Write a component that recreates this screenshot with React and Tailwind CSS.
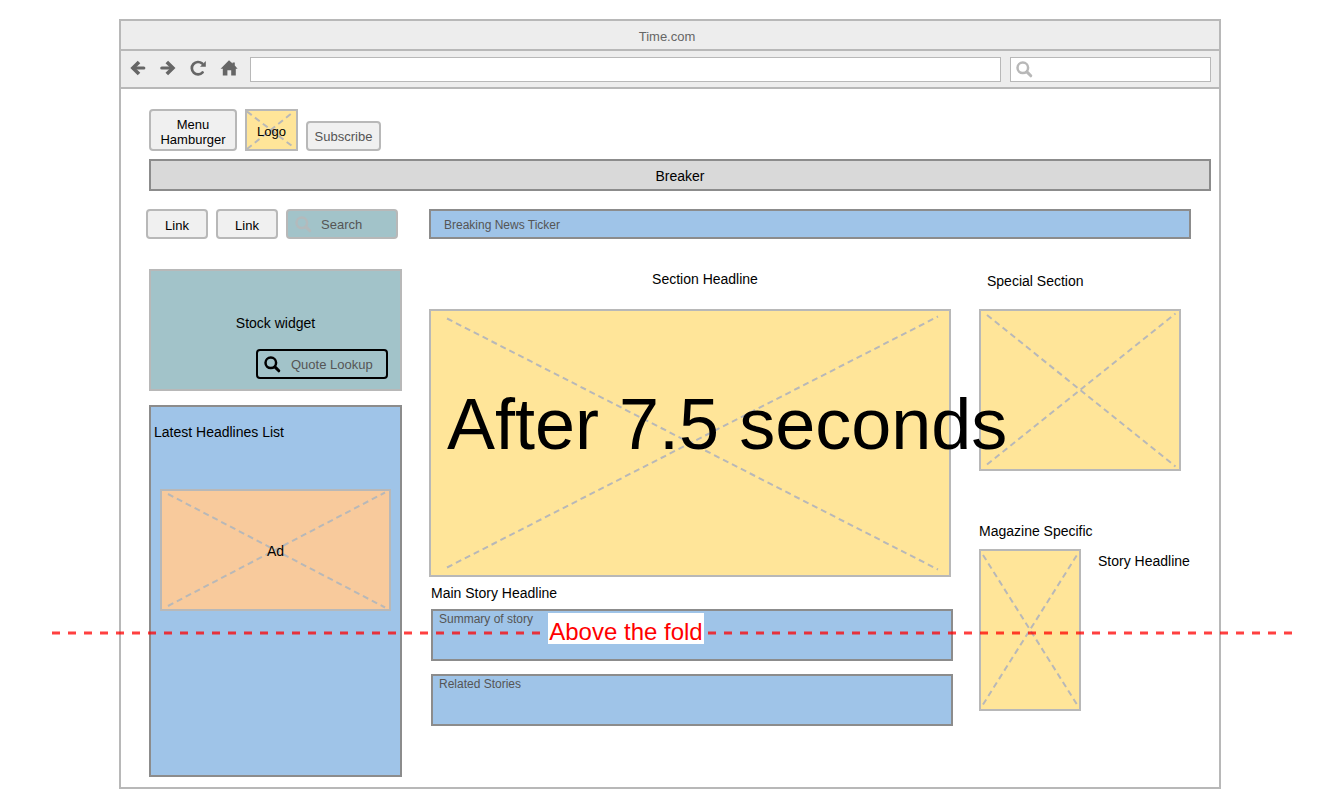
function Magnifier({ className }) {
  return (
    <svg viewBox="0 0 17 17" className={className} fill="none" stroke="currentColor" aria-hidden="true">
      <circle cx="6.8" cy="6.8" r="5.3" strokeWidth="2.5" />
      <path d="M10.9 10.9L14.8 14.8" strokeWidth="3" strokeLinecap="round" />
    </svg>
  );
}

function Crossed({ width, height, lines, className, children }) {
  return (
    <div className={`relative border-2 border-[#b8b8b8] ${className}`}>
      <svg
        viewBox={`0 0 ${width} ${height}`}
        preserveAspectRatio="none"
        className="absolute inset-0 h-full w-full"
        stroke="#b8b8b8"
        strokeWidth="2"
        strokeDasharray="6 4"
        aria-hidden="true"
      >
        {lines.map(([x1, y1, x2, y2]) => (
          <line key={y1} x1={x1} y1={y1} x2={x2} y2={y2} vectorEffect="non-scaling-stroke" />
        ))}
      </svg>
      {children}
    </div>
  );
}

function Toolbar() {
  return (
    <div className="flex h-9 items-center bg-[#ededed] pr-2 pl-[9px] text-[#666]">
      <div className="flex gap-[14px]">
        <button type="button" aria-label="Back">
          <svg viewBox="0 0 16 16" className="h-4 w-4 overflow-visible" fill="none" stroke="currentColor" strokeWidth="3.6">
            <path d="M9 0.9L2.9 7L9 13.1" />
            <path d="M3.6 7H13.8" strokeLinecap="round" strokeWidth="3.2" />
          </svg>
        </button>
        <button type="button" aria-label="Forward">
          <svg viewBox="0 0 16 16" className="h-4 w-4 overflow-visible" fill="none" stroke="currentColor" strokeWidth="3.6">
            <path d="M6.8 0.9L12.9 7L6.8 13.1" />
            <path d="M1.8 7H12.2" strokeLinecap="round" strokeWidth="3.2" />
          </svg>
        </button>
        <button type="button" aria-label="Reload">
          <svg viewBox="0 0 16 16" className="h-4 w-4 overflow-visible" fill="none" stroke="currentColor" strokeWidth="2.7">
            <path d="M12.6 11.4A6.2 6.2 0 1 1 12.2 2.6" strokeLinecap="round" />
            <path d="M15.8 0V5.8H10Z" fill="currentColor" stroke="none" />
          </svg>
        </button>
        <button type="button" aria-label="Home">
          <svg viewBox="0 0 18 16" className="h-4 w-[18px] overflow-visible" fill="currentColor">
            <path d="M9 -0.8L12.6 2.4V1.4H14.8V4.6L17.6 7.8H15.8V14.6H11.2V9.2H7.4V14.6H2.8V7.8H0.6Z" />
          </svg>
        </button>
      </div>
      <input
        type="text"
        aria-label="Address"
        className="ml-[12px] h-[25px] min-w-0 flex-1 border border-[#b8b8b8] bg-white px-2 text-[13px] outline-none"
      />
      <label className="ml-[9px] flex h-[25px] w-[201px] items-center border border-[#b8b8b8] bg-white pl-[5px]">
        <Magnifier className="h-[17px] w-[17px] shrink-0 text-[#b8b8b8]" />
        <input type="search" aria-label="Web search" className="min-w-0 flex-1 text-[13px] outline-none" />
      </label>
    </div>
  );
}

const smallButton = "rounded-[4px] border-2 border-[#b8b8b8] bg-[#f0f0f0] text-[13px] leading-[15px]";

function Sidebar() {
  return (
    <aside className="w-[256px] shrink-0">
      <nav className="flex gap-2">
        <a href="#link-1" className={`${smallButton} flex h-[30px] w-[62px] items-center justify-center pt-[2px]`}>
          Link
        </a>
        <a href="#link-2" className={`${smallButton} flex h-[30px] w-[62px] items-center justify-center pt-[2px]`}>
          Link
        </a>
        <label className="flex h-[30px] w-[112px] shrink-0 items-center rounded-[4px] border-2 border-[#b8b8b8] bg-[#a2c3c9] pl-[7px]">
          <Magnifier className="h-[17px] w-[17px] shrink-0 text-[#b3babc]" />
          <input
            type="search"
            aria-label="Search"
            placeholder="Search"
            className="ml-[9px] w-0 flex-1 pt-[2px] text-[13px] outline-none placeholder:text-[#555]"
          />
        </label>
      </nav>

      <section className="mt-[30px] ml-[3px] flex h-[122px] flex-col border-2 border-[#b8b8b8] bg-[#a2c3c9] pt-[42px] pr-3">
        <h2 className="pl-3 text-center text-sm leading-5">Stock widget</h2>
        <label className="mt-4 ml-auto flex h-[30px] w-[132px] shrink-0 items-center rounded-[4px] border-2 border-black pl-[6px]">
          <Magnifier className="h-[17px] w-[17px] shrink-0" />
          <input
            type="search"
            aria-label="Quote Lookup"
            placeholder="Quote Lookup"
            className="ml-[10px] w-0 flex-1 pt-[2px] text-[13px] outline-none placeholder:text-[#555]"
          />
        </label>
      </section>

      <section className="mt-[14px] ml-[3px] h-[372px] border-2 border-[#8c8c8c] bg-[#9fc4e8] pt-[15px] pr-[9px] pl-[9px]">
        <h2 className="-ml-[6px] text-sm leading-5">Latest Headlines List</h2>
        <Crossed
          width={227}
          height={118}
          lines={[
            [6, 3, 223, 116.5],
            [6, 115, 223, 1.5],
          ]}
          className="mt-[47px] flex h-[122px] items-center justify-center bg-[#f8ca9c]"
        >
          <span className="relative pt-[2px] text-sm leading-5">Ad</span>
        </Crossed>
      </section>
    </aside>
  );
}

function Stories() {
  return (
    <div className="min-w-0 flex-1">
      <h2 className="pl-[30px] text-center text-sm leading-5">Section Headline</h2>
      <div className="relative mt-5">
        <Crossed
          width={518}
          height={264}
          lines={[
            [16, 7.5, 507, 258.5],
            [16, 256.5, 507, 5.5],
          ]}
          className="h-[268px] bg-[#ffe599]"
        />
        <p className="absolute top-[79px] left-[18px] z-10 text-[72px] leading-[72px] whitespace-nowrap">
          After 7.5 seconds
        </p>
      </div>
      <div className="-mr-0.5 ml-0.5">
        <h3 className="mt-[6px] text-sm leading-5">Main Story Headline</h3>
        <div className="mt-[6px] h-[52px] border-2 border-[#8c8c8c] bg-[#9fc4e8] px-[6px] text-xs leading-4 text-[#555]">
          Summary of story
        </div>
        <div className="mt-[13px] h-[52px] border-2 border-[#8c8c8c] bg-[#9fc4e8] px-[6px] text-xs leading-4 text-[#555]">
          Related Stories
        </div>
      </div>
    </div>
  );
}

function Specials() {
  return (
    <div className="w-[212px] shrink-0">
      <h2 className="mt-0.5 ml-2 text-sm leading-5">Special Section</h2>
      <Crossed
        width={198}
        height={158}
        lines={[
          [6, 4, 194.5, 155.5],
          [6, 153.5, 194.5, 2.5],
        ]}
        className="mt-[18px] h-[162px] w-[202px] bg-[#ffe599]"
      />
      <h2 className="mt-[50px] text-sm leading-5">Magazine Specific</h2>
      <div className="mt-2 flex items-start gap-[17px]">
        <Crossed
          width={98}
          height={158}
          lines={[
            [2, 4, 96, 153.5],
            [2, 153.5, 96, 4],
          ]}
          className="h-[162px] w-[102px] shrink-0 bg-[#ffe599]"
        />
        <h3 className="mt-0.5 text-sm leading-5 whitespace-nowrap">Story Headline</h3>
      </div>
    </div>
  );
}

export default function App() {
  return (
    <div
      className="relative min-h-screen bg-white pt-[19px] pr-[103px] pb-[19px] pl-[119px] text-black"
      style={{ fontFamily: '"Liberation Sans", Arial, sans-serif' }}
    >
      <div className="border-2 border-[#b8b8b8]">
        <header>
          <div className="h-7 bg-[#ededed] pt-[2px] pr-[6px] text-center text-[13px] leading-7 text-[#666]">Time.com</div>
          <div className="border-y-2 border-[#b8b8b8]">
            <Toolbar />
          </div>
        </header>

        <main className="pt-5 pr-2 pb-[10px] pl-[25px]">
          <div className="ml-[3px] flex items-end gap-2">
            <button type="button" className={`${smallButton} h-[42px] w-[88px] pt-1`}>
              Menu Hamburger
            </button>
            <Crossed
              width={49}
              height={38}
              lines={[
                [0, 0.5, 45, 35],
                [0, 38, 45, 2],
              ]}
              className="flex h-[42px] w-[53px] items-center justify-center bg-[#ffe599]"
            >
              <span className="relative pt-[2px] text-[13px] leading-[15px]">Logo</span>
            </Crossed>
            <button type="button" className={`${smallButton} h-[30px] w-[75px] text-[#555]`}>
              Subscribe
            </button>
          </div>

          <div className="mt-2 ml-[3px] h-8 border-2 border-[#8c8c8c] bg-[#d9d9d9] pt-[1px] text-center text-sm leading-7">
            Breaker
          </div>

          <div className="mt-[18px] flex">
            <Sidebar />
            <div className="mr-5 ml-[27px] min-w-0 flex-1">
              <div className="h-[30px] border-2 border-[#8c8c8c] bg-[#9fc4e8] pt-[2px] pl-[13px] text-xs leading-6 text-[#555]">
                Breaking News Ticker
              </div>
              <div className="mt-[30px] flex gap-7">
                <Stories />
                <Specials />
              </div>
            </div>
          </div>
        </main>
      </div>

      <div className="absolute top-[613px] right-[32px] left-[52px] z-20">
        <svg className="absolute top-[18px] left-0 h-1 w-full" aria-hidden="true">
          <line x1="0" y1="2" x2="100%" y2="2" stroke="#ff0000" strokeOpacity="0.75" strokeWidth="3" strokeDasharray="8 8" />
        </svg>
        <p className="relative ml-[40%] h-[31px] w-[156px] bg-white pt-[6px] text-center text-2xl leading-[26px] text-[#ff0000]">
          Above the fold
        </p>
      </div>
    </div>
  );
}
